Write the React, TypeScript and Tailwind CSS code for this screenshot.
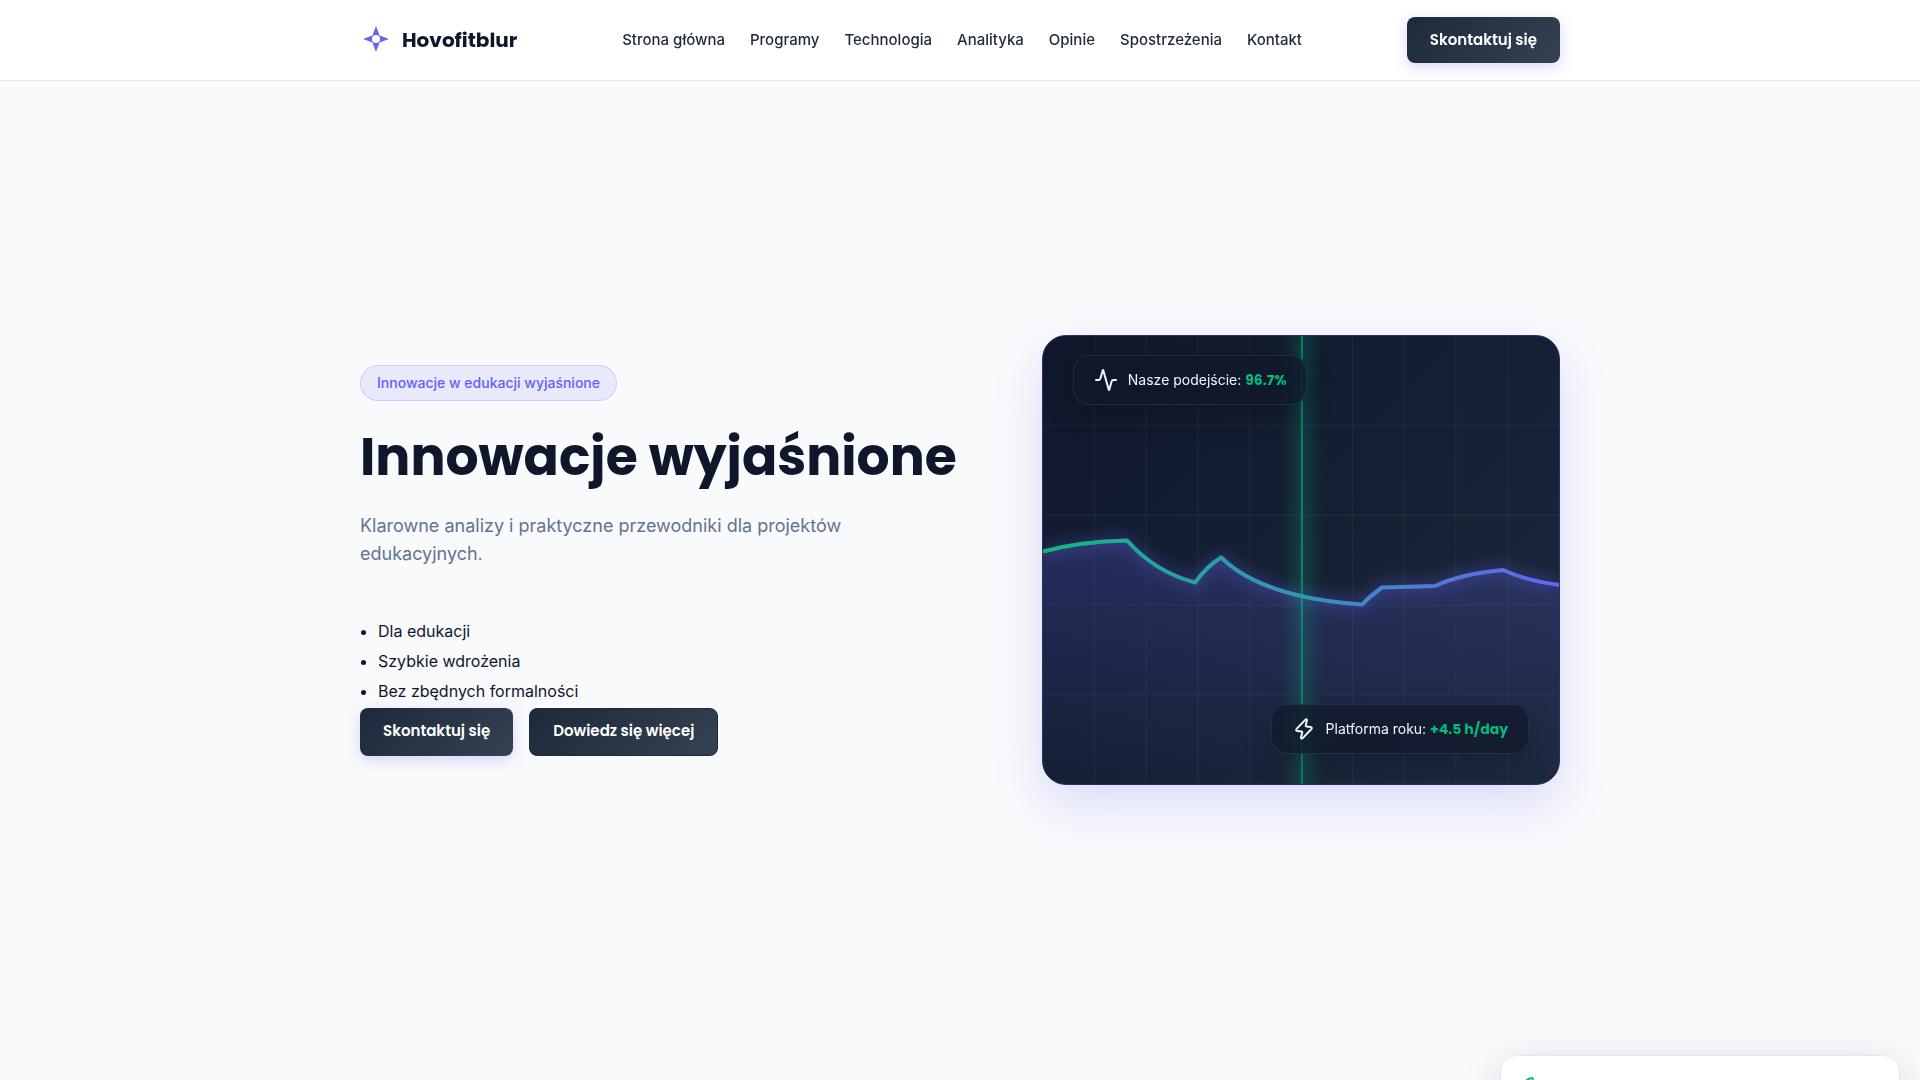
import React from 'react';
import { Activity } from 'lucide-react';

const navLinks = [
  { label: 'Strona główna', href: '#home' },
  { label: 'Programy', href: '#programs' },
  { label: 'Technologia', href: '#technology' },
  { label: 'Analityka', href: '#analytics' },
  { label: 'Opinie', href: '#reviews' },
  { label: 'Spostrzeżenia', href: '#insights' },
  { label: 'Kontakt', href: '#contact' },
];

const benefits = ['Dla edukacji', 'Szybkie wdrożenia', 'Bez zbędnych formalności'];

const linePath =
  'M0 215.5Q37 205.5 84 204.5Q112 236 152 246.5Q164 230 178 221.5Q220 262 319 268.5Q327 260 339 251.5L392 250Q417 238 460 234Q484 245 516 249';

function Logo() {
  return (
    <a href="#home" className="flex items-center gap-2.5">
      <svg viewBox="0 0 32 32" className="-mt-0.5 size-8" aria-hidden="true">
        <path d="M16 3L19.6 12.4L29 16L19.6 19.6L16 29L12.4 19.6L3 16L12.4 12.4Z" fill="#6366f1" />
        <circle cx="16" cy="16" r="4" fill="#f8fafc" />
      </svg>
      <span className="font-['Poppins','Inter',sans-serif] text-xl font-bold text-slate-900">Hovofitblur</span>
    </a>
  );
}

function BoltIcon() {
  return (
    <svg viewBox="0 0 24 24" fill="none" stroke="currentColor" strokeWidth="2" strokeLinejoin="round" className="size-6" aria-hidden="true">
      <path d="M13.5 2.6L4.8 11.6C3.6 12.9 4.2 13.9 5.6 14.1L9.6 14.6C10.3 14.7 10.4 15.1 10.2 15.7L9 20.2C8.7 21.6 9.8 22 10.7 21.1L19.2 12.3C20.3 11.1 19.8 10.1 18.5 9.9L14.4 9.4C13.7 9.3 13.6 8.9 13.8 8.3L14.9 3.5C15.2 2.2 14.3 1.8 13.5 2.6Z" />
    </svg>
  );
}

function Chart() {
  return (
    <svg viewBox="0 0 516 448" preserveAspectRatio="none" className="block size-full" aria-hidden="true">
      <defs>
        <linearGradient id="line" x1="0" y1="0" x2="1" y2="0">
          <stop offset="0%" stopColor="#10b981" />
          <stop offset="100%" stopColor="#6366f1" />
        </linearGradient>
        <linearGradient id="area" gradientUnits="userSpaceOnUse" x1="0" y1="204" x2="0" y2="448">
          <stop offset="0%" stopColor="#6366f1" stopOpacity="0.24" />
          <stop offset="100%" stopColor="#6366f1" stopOpacity="0" />
        </linearGradient>
        <filter id="glow" x="-10%" y="-60%" width="120%" height="220%">
          <feDropShadow dx="0" dy="0" stdDeviation="8" floodColor="#6366f1" floodOpacity="0.8" />
        </filter>
      </defs>
      <g stroke="#fff" strokeOpacity="0.04" strokeWidth="1.5">
        {[1, 2, 3, 4, 5, 6, 7, 8, 9].map((n) => (
          <line key={n} x1={n * 51.6} x2={n * 51.6} y1="0" y2="448" />
        ))}
        {[1, 2, 3, 4, 5].map((n) => (
          <line key={n} x1="0" x2="516" y1={n * 89.6} y2={n * 89.6} />
        ))}
      </g>
      <path d={`${linePath}V448H0Z`} fill="url(#area)" />
      <path d={linePath} fill="none" stroke="url(#line)" strokeWidth="4" strokeLinejoin="round" filter="url(#glow)" />
    </svg>
  );
}

function StatChip({ icon, label, value, className }: { icon: React.ReactNode; label: string; value: string; className: string }) {
  return (
    <div
      className={`absolute flex h-[50px] items-center gap-2.5 rounded-2xl border border-white/8 bg-[#0f172a]/70 px-5 text-sm text-slate-100 shadow-[0_10px_30px_rgba(0,0,0,0.2)] backdrop-blur-md ${className}`}
    >
      {icon}
      <span>
        {label} <strong className="font-['Poppins','Inter',sans-serif] font-bold text-emerald-500">{value}</strong>
      </span>
    </div>
  );
}

export default function App() {
  return (
    <div className="min-h-screen bg-[#f9fafc] font-['Inter',sans-serif] text-slate-900">
      <header className="fixed inset-x-0 top-0 z-10 border-b border-slate-200 bg-white">
        <div className="mx-auto flex h-20 max-w-[1200px] items-center justify-between">
          <Logo />
          <nav className="flex gap-[25px] text-[15px] font-medium text-gray-800">
            {navLinks.map((link) => (
              <a key={link.href} href={link.href}>
                {link.label}
              </a>
            ))}
          </nav>
          <button className="h-[46px] rounded-lg bg-linear-135 from-gray-800 to-gray-700 px-[23px] font-['Poppins','Inter',sans-serif] text-[15px] font-semibold text-white shadow-[0_4px_14px_rgba(99,102,241,0.25)]">
            Skontaktuj się
          </button>
        </div>
      </header>

      <main id="home" className="flex min-h-screen items-center pt-[120px] pb-20">
        <div className="mx-auto grid w-full max-w-[1200px] grid-cols-[1.2fr_1fr] items-center gap-[60px]">
          <section>
            <span className="inline-flex h-9 items-center rounded-full border border-indigo-500/20 bg-indigo-500/10 px-4 text-sm font-medium text-indigo-500">
              Innowacje w edukacji wyjaśnione
            </span>
            <h1 className="mt-6 font-['Poppins','Inter',sans-serif] text-[52px] leading-[63px] font-bold text-slate-900">
              Innowacje wyjaśnione
            </h1>
            <p className="mt-6 max-w-[540px] text-lg leading-[28px] text-slate-500">
              Klarowne analizy i praktyczne przewodniki dla projektów edukacyjnych.
            </p>
            <ul className="mt-12 mb-0.5 list-disc pl-[18px] leading-[30px]">
              {benefits.map((item) => (
                <li key={item}>{item}</li>
              ))}
            </ul>
            <div className="flex gap-4">
              <button className="h-12 rounded-lg bg-linear-135 from-gray-800 to-gray-700 px-[23px] font-['Poppins','Inter',sans-serif] text-[15px] font-semibold text-white shadow-[0_4px_14px_rgba(99,102,241,0.25)]">
                Skontaktuj się
              </button>
              <button className="h-12 rounded-lg border border-gray-800 bg-linear-135 from-gray-800 to-gray-700 px-[23px] font-['Poppins','Inter',sans-serif] text-[15px] font-semibold text-white">
                Dowiedz się więcej
              </button>
            </div>
          </section>

          <section className="relative h-[450px] overflow-hidden rounded-3xl border border-[#2b2e68] bg-linear-135 from-slate-900 to-slate-800 shadow-[0_20px_50px_rgba(99,102,241,0.2)]">
            <Chart />
            <div className="absolute inset-y-0 left-1/2 w-0.5 bg-emerald-500 opacity-60 shadow-[0_0_16px_8px_rgba(16,185,129,0.4)]" />
            <StatChip icon={<Activity size={24} />} label="Nasze podejście:" value="96.7%" className="top-[19px] left-[30px]" />
            <StatChip icon={<BoltIcon />} label="Platforma roku:" value="+4.5 h/day" className="right-[30px] bottom-[30px]" />
          </section>
        </div>
      </main>

      <aside className="fixed top-full right-5 -mt-[25px] w-[400px] rounded-2xl border border-slate-200 bg-white p-5 shadow-[0_10px_40px_rgba(15,23,42,0.15)]">
        <svg viewBox="0 0 24 24" fill="none" stroke="#10b981" strokeWidth="2" className="size-6" aria-hidden="true">
          <path d="M12 2a10 10 0 1 0 10 10 4 4 0 0 1-5-5 4 4 0 0 1-5-5" />
        </svg>
      </aside>
    </div>
  );
}
